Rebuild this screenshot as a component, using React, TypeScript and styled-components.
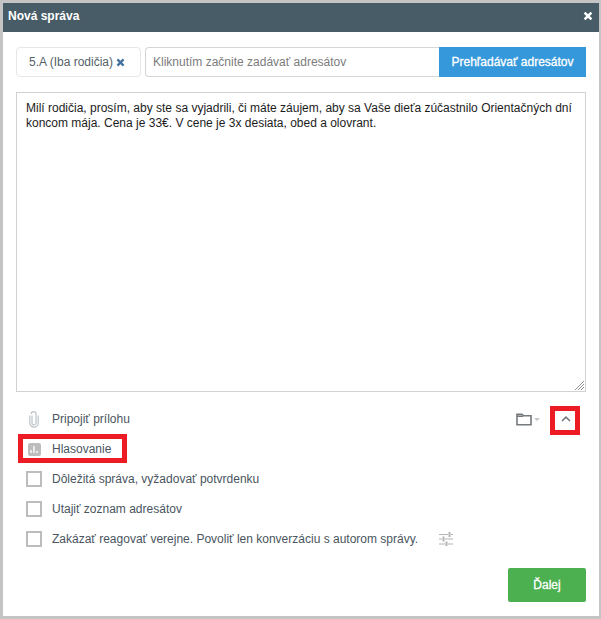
import styled, { createGlobalStyle } from "styled-components"

const GlobalStyle = createGlobalStyle`
  html, body {
    margin: 0;
    padding: 0;
    background: #c4c4c4;
    font-family: "Liberation Sans", Arial, sans-serif;
  }
`

const Modal = styled.div`
  position: relative;
  box-sizing: border-box;
  width: 596px;
  height: 613px;
  margin: 3px 0 0 3px;
  background: #fff;
`

const Header = styled.div`
  box-sizing: border-box;
  display: flex;
  align-items: center;
  justify-content: space-between;
  height: 29px;
  padding: 0 6px 3px 5px;
  background: #475c67;
  color: #fff;
  font-size: 12px;
  font-weight: bold;
`

const CloseIcon = styled.svg`
  width: 10px;
  height: 10px;
  display: block;
`

const Body = styled.div`
  padding: 15px 13px 0;
`

const AddressRow = styled.div`
  display: flex;
  height: 30px;
`

const Chip = styled.div`
  box-sizing: border-box;
  display: flex;
  align-items: center;
  gap: 3px;
  width: 125px;
  margin-right: 4px;
  padding-left: 12px;
  border: 1px solid #e6e6e6;
  border-radius: 4px;
  font-size: 12px;
  color: #555f68;
`

const ChipRemove = styled.svg`
  width: 9px;
  height: 9px;
  display: block;
`

const AddressInput = styled.div`
  box-sizing: border-box;
  display: flex;
  align-items: center;
  width: 294px;
  padding-left: 7px;
  border: 1px solid #d6d6d6;
  border-right: none;
  border-radius: 4px 0 0 4px;
  font-size: 12px;
  color: #7c7c7c;
`

const BrowseButton = styled.div`
  display: flex;
  align-items: center;
  justify-content: center;
  width: 147px;
  background: #3498db;
  color: #fff;
  font-size: 12px;
  -webkit-text-stroke: 0.3px #fff;
`

const MessageBox = styled.div`
  position: relative;
  box-sizing: border-box;
  height: 300px;
  margin-top: 15px;
  padding: 8px 9px;
  border: 1px solid #d2d2d2;
  font-size: 12px;
  line-height: 15px;
  color: #1c1c1c;
`

const ResizeGrip = styled.svg`
  position: absolute;
  right: 0;
  bottom: 0;
  width: 11px;
  height: 11px;
`

const OptionList = styled.div`
  display: flex;
  flex-direction: column;
  margin-top: 12px;
`

const OptionRow = styled.div`
  display: flex;
  align-items: center;
  height: 30px;
  padding-left: 10px;
  font-size: 12px;
  color: #4a5560;
`

const OptionIconSlot = styled.div`
  display: flex;
  justify-content: center;
  width: 16px;
  margin-right: 10px;
`

const Checkbox = styled.div`
  box-sizing: border-box;
  width: 16px;
  height: 16px;
  border: 2px solid #bdbdbd;
`

const PollIcon = styled.div`
  display: flex;
  align-items: flex-end;
  justify-content: center;
  gap: 1px;
  box-sizing: border-box;
  width: 13px;
  height: 13px;
  padding-bottom: 3px;
  border-radius: 2px;
  background: #bdbdbd;
`

const PollBar = styled.span<{ $height: number }>`
  display: block;
  width: 2px;
  height: ${(p) => p.$height}px;
  background: #e9e9e9;
`

const RowTools = styled.div`
  display: flex;
  align-items: center;
  margin-left: auto;
  margin-right: 10px;
`

const Caret = styled.span`
  width: 0;
  height: 0;
  margin-left: 2px;
  border-left: 3px solid transparent;
  border-right: 3px solid transparent;
  border-top: 3px solid #c4c4c4;
`

const ChevronSlot = styled.div`
  display: flex;
  justify-content: center;
  width: 20px;
  margin-left: 16px;
`

const SettingsIcon = styled.svg`
  width: 15px;
  height: 14px;
  margin-left: 21px;
`

const Footer = styled.div`
  display: flex;
  justify-content: flex-end;
  margin-top: 14px;
`

const NextButton = styled.div`
  display: flex;
  align-items: center;
  justify-content: center;
  width: 78px;
  height: 34px;
  border-radius: 2px;
  background: #4caf50;
  color: #fff;
  font-size: 12px;
  -webkit-text-stroke: 0.3px #fff;
`

const Highlight = styled.div<{ $left: number; $top: number; $width: number; $height: number }>`
  position: absolute;
  box-sizing: border-box;
  left: ${(p) => p.$left}px;
  top: ${(p) => p.$top}px;
  width: ${(p) => p.$width}px;
  height: ${(p) => p.$height}px;
  border: 5px solid #ed1c24;
`

const App = () => {
  return (
    <>
      <GlobalStyle />
      <Modal>
        <Header>
          Nová správa
          <CloseIcon viewBox="0 0 10 10">
            <path d="M1.6 1.6 L8.4 8.4 M8.4 1.6 L1.6 8.4" stroke="#fff" strokeWidth="2.6" />
          </CloseIcon>
        </Header>
        <Body>
          <AddressRow>
            <Chip>
              5.A (Iba rodičia)
              <ChipRemove viewBox="0 0 10 10">
                <path d="M1.6 1.6 L8.4 8.4 M8.4 1.6 L1.6 8.4" stroke="#43729e" strokeWidth="2.6" />
              </ChipRemove>
            </Chip>
            <AddressInput>Kliknutím začnite zadávať adresátov</AddressInput>
            <BrowseButton>Prehľadávať adresátov</BrowseButton>
          </AddressRow>
          <MessageBox>
            Milí rodičia, prosím, aby ste sa vyjadrili, či máte záujem, aby sa Vaše dieťa zúčastnilo Orientačných dní
            koncom mája. Cena je 33€. V cene je 3x desiata, obed a olovrant.
            <ResizeGrip viewBox="0 0 11 11">
              <path d="M1 10 L10 1 M4 10 L10 4 M7 10 L10 7" stroke="#777" strokeWidth="0.8" fill="none" />
            </ResizeGrip>
          </MessageBox>
          <OptionList>
            <OptionRow>
              <OptionIconSlot>
                <svg width="10" height="17" viewBox="0 0 10 17" fill="none" stroke="#bcc3c8" strokeWidth="1.2">
                  <path d="M3 4.5 V12 a2 2 0 0 0 4 0 V3 a2.4 2.4 0 0 0 -4.8 0 M0.8 4.5 V12 a4.2 4.2 0 0 0 8.4 0 V4.5" />
                </svg>
              </OptionIconSlot>
              Pripojiť prílohu
              <RowTools>
                <svg width="16" height="13" viewBox="0 0 16 13" fill="none" stroke="#74797d" strokeWidth="1.6">
                  <path d="M1 11.8 V1.2 H6 L7.5 2.8 H15 V11.8 Z" />
                  <path d="M1 3.2 H7" />
                </svg>
                <Caret />
                <ChevronSlot>
                  <svg width="10" height="6" viewBox="0 0 10 6" fill="none" stroke="#74797d" strokeWidth="1.6">
                    <path d="M1 5 L5 1.2 L9 5" />
                  </svg>
                </ChevronSlot>
              </RowTools>
            </OptionRow>
            <OptionRow>
              <OptionIconSlot>
                <PollIcon>
                  <PollBar $height={3} />
                  <PollBar $height={7} />
                  <PollBar $height={2} />
                </PollIcon>
              </OptionIconSlot>
              Hlasovanie
            </OptionRow>
            <OptionRow>
              <OptionIconSlot>
                <Checkbox />
              </OptionIconSlot>
              Dôležitá správa, vyžadovať potvrdenku
            </OptionRow>
            <OptionRow>
              <OptionIconSlot>
                <Checkbox />
              </OptionIconSlot>
              Utajiť zoznam adresátov
            </OptionRow>
            <OptionRow>
              <OptionIconSlot>
                <Checkbox />
              </OptionIconSlot>
              Zakázať reagovať verejne. Povoliť len konverzáciu s autorom správy.
              <SettingsIcon viewBox="0 0 15 14" fill="none" stroke="#b4b4b4" strokeWidth="1.2">
                <path d="M0 2.5 H9 M12 2.5 H14 M0 7 H3 M6 7 H14 M0 12 H6 M9 12 H14" />
                <path d="M10.5 0 V5 M4.5 4.5 V9.5 M7.5 9.5 V14" strokeWidth="2" />
              </SettingsIcon>
            </OptionRow>
          </OptionList>
          <Footer>
            <NextButton>Ďalej</NextButton>
          </Footer>
        </Body>
        <Highlight $left={15} $top={431} $width={109} $height={29} />
        <Highlight $left={547} $top={403} $width={30} $height={29} />
      </Modal>
    </>
  )
}

export default App
